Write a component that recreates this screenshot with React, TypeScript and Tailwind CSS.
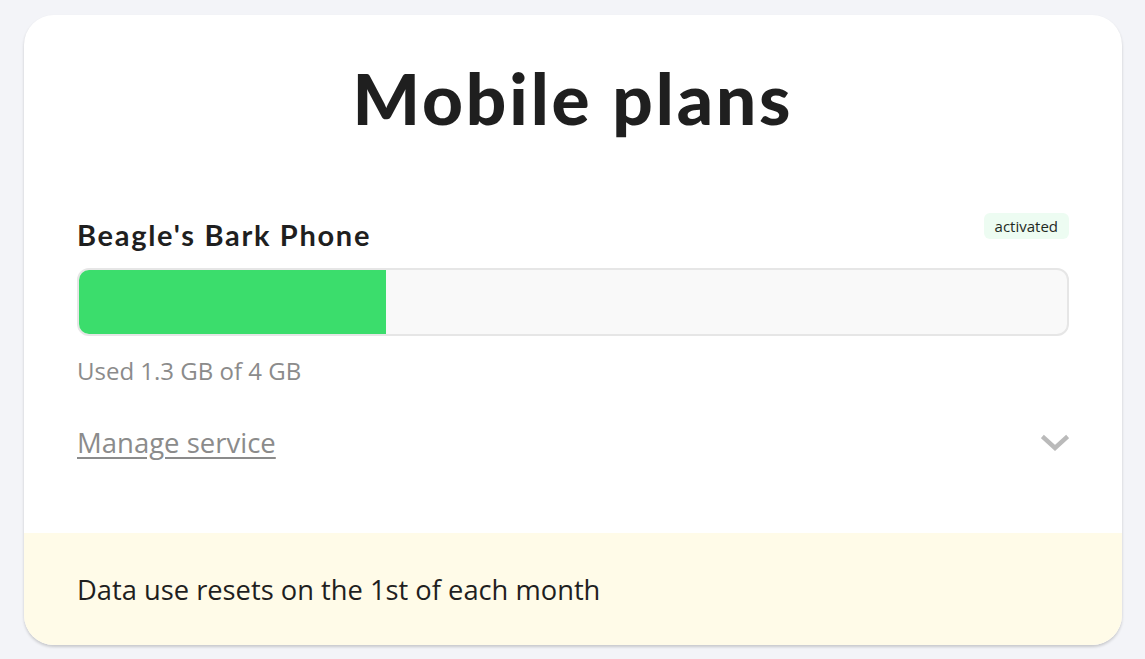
import React from "react";

const USED_GB = 1.3;
const TOTAL_GB = 4;

function Chevron() {
  return (
    <svg width="28" height="18" viewBox="0 0 28 18" fill="none">
      <path
        d="M3 4 L14 14 L25 4"
        stroke="#bababa"
        strokeWidth="4.5"
        strokeLinecap="square"
        strokeLinejoin="miter"
      />
    </svg>
  );
}

export default function App() {
  const pct = (USED_GB / TOTAL_GB) * 100;
  return (
    <div className="min-h-screen bg-[#f3f4f8] pl-[24px] pr-[23px] pt-[15px] font-['Open_Sans',sans-serif]">
      <div className="overflow-hidden rounded-[30px] bg-white shadow-[0_2px_3px_rgba(0,0,0,0.18)]">
        <div className="px-[53px] pt-[43px] pb-[72px]">
          <h1 className="text-center font-['Lato',sans-serif] text-[71px] leading-[80px] font-black tracking-[2.9px] text-[#1f1f1f]">
            Mobile plans
          </h1>

          <div className="mt-[75px] flex items-start justify-between">
            <h2 className="pt-[4px] font-['Lato',sans-serif] text-[29px] leading-[36px] font-bold tracking-[1.7px] text-[#1f1f1f]">
              Beagle's Bark Phone
            </h2>
            <span className="rounded-[6px] bg-[#edfcf2] px-[11px] py-[2px] text-[15px] leading-[22px] text-[#1f2a1f]">
              activated
            </span>
          </div>

          <div className="mt-[15px] h-[68px] overflow-hidden rounded-[12px] border-2 border-[#e6e6e6] bg-[#f9f9f9]">
            <div className="h-full bg-[#3bdd6c]" style={{ width: `${pct * 0.955}%` }} />
          </div>

          <p className="mt-[19px] text-[24px] leading-[32px] text-[#8b8b8b]">
            Used 1.3 GB of 4 GB
          </p>

          <div className="mt-[38px] flex items-center justify-between">
            <a href="#" className="text-[27.5px] leading-[36px] text-[#8b8b8b] underline underline-offset-[4px]">
              Manage service
            </a>
            <Chevron />
          </div>
        </div>

        <div className="bg-[#fffbe8] px-[53px] pt-[39px] pb-[37px]">
          <p className="text-[27.3px] leading-[36px] text-[#1f1f1f]">
            Data use resets on the 1st of each month
          </p>
        </div>
      </div>
    </div>
  );
}
